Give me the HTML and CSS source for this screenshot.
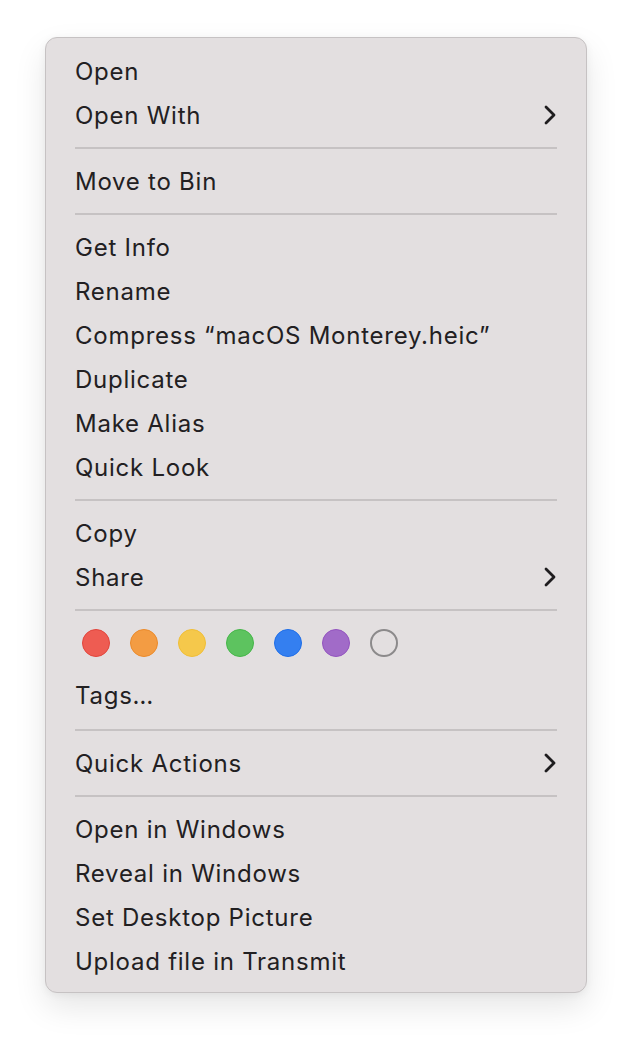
FILE: index.html
```html
<!DOCTYPE html>
<html>
<head>
<meta charset="utf-8">
<link rel="stylesheet" href="styles.css">
</head>
<body>
<div class="menu">
  <div class="item">Open</div>
  <div class="item">Open With<svg class="chev" viewBox="0 0 12 20"><path d="M2 2 L10 10 L2 18"/></svg></div>
  <div class="sep"></div>
  <div class="item">Move to Bin</div>
  <div class="sep"></div>
  <div class="item">Get Info</div>
  <div class="item">Rename</div>
  <div class="item">Compress “macOS Monterey.heic”</div>
  <div class="item">Duplicate</div>
  <div class="item">Make Alias</div>
  <div class="item">Quick Look</div>
  <div class="sep"></div>
  <div class="item">Copy</div>
  <div class="item">Share<svg class="chev" viewBox="0 0 12 20"><path d="M2 2 L10 10 L2 18"/></svg></div>
  <div class="sep"></div>
  <div class="tags">
    <span class="dot red"></span>
    <span class="dot orange"></span>
    <span class="dot yellow"></span>
    <span class="dot green"></span>
    <span class="dot blue"></span>
    <span class="dot purple"></span>
    <span class="dot none"></span>
  </div>
  <div class="item item-tags">Tags…</div>
  <div class="sep"></div>
  <div class="item">Quick Actions<svg class="chev" viewBox="0 0 12 20"><path d="M2 2 L10 10 L2 18"/></svg></div>
  <div class="sep"></div>
  <div class="item">Open in Windows</div>
  <div class="item">Reveal in Windows</div>
  <div class="item">Set Desktop Picture</div>
  <div class="item">Upload file in Transmit</div>
</div>
</body>
</html>
```
FILE: styles.css
```css
html, body {
  margin: 0;
  padding: 0;
  background: #ffffff;
}
body {
  padding: 37px 0 60px 45px;
  min-height: 100vh;
  box-sizing: border-box;
  font-family: Inter, "Noto Sans", sans-serif;
}
.menu {
  width: 540px;
  box-sizing: content-box;
  background: #e3dfe0;
  border: 1px solid #c6c2c3;
  border-radius: 12px;
  padding: 11px 0 9px 0;
  box-shadow: 0 14px 32px rgba(0, 0, 0, 0.10), 0 2px 8px rgba(0, 0, 0, 0.05);
}
.item {
  height: 44px;
  display: flex;
  align-items: center;
  justify-content: space-between;
  padding: 0 29px 0 29px;
  font-size: 24px;
  color: #222022;
  letter-spacing: 0.75px;
}
.item-tags {
  height: 46px;
  box-sizing: border-box;
  padding-bottom: 2px;
}
.chev {
  width: 12px;
  height: 20px;
  fill: none;
  stroke: #1f1d1f;
  stroke-width: 2.8;
  stroke-linecap: round;
  stroke-linejoin: round;
  margin-right: 1px;
}
.sep {
  height: 2px;
  background: #c6c2c3;
  margin: 10px 29px 10px 29px;
}
.tags {
  display: flex;
  gap: 20px;
  padding: 8px 0 16px 36px;
}
.dot {
  width: 28px;
  height: 28px;
  border-radius: 50%;
  box-sizing: border-box;
  border: 1.5px solid transparent;
}
.red { background: #ee5c52; border-color: #e2443b; }
.orange { background: #f39c43; border-color: #eb8a2a; }
.yellow { background: #f5c84b; border-color: #f0be36; }
.green { background: #5dc35f; border-color: #45b649; }
.blue { background: #347ff0; border-color: #1f6ee8; }
.purple { background: #a16bc8; border-color: #9353bf; }
.none { background: transparent; border: 2px solid #8c8a8b; }
```
